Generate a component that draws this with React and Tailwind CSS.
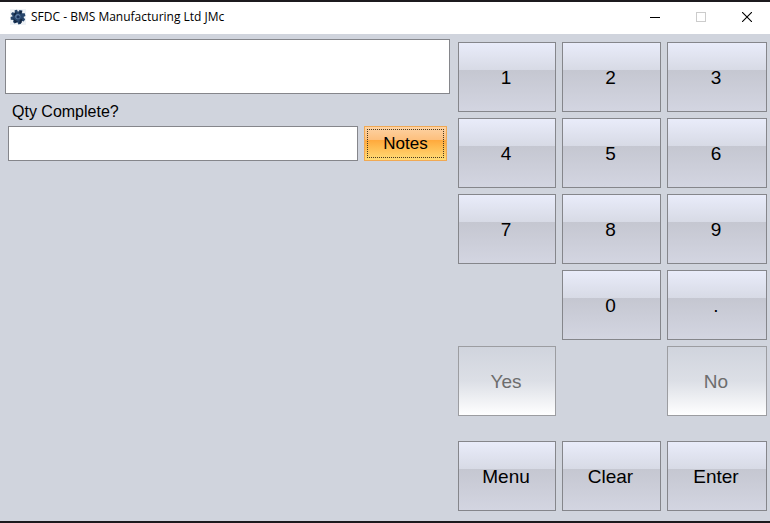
import React, { useState } from 'react';

const keys = [
    { label: '1' },
    { label: '2' },
    { label: '3' },
    { label: '4' },
    { label: '5' },
    { label: '6' },
    { label: '7' },
    { label: '8' },
    { label: '9' },
    { label: '0', className: 'col-start-2' },
    { label: '.' },
    { label: 'Yes', disabled: true },
    { label: 'No', disabled: true, className: 'col-start-3' },
    { label: 'Menu', className: 'mt-[19px]' },
    { label: 'Clear', className: 'mt-[19px]' },
    { label: 'Enter', className: 'mt-[19px]' },
];

function GearIcon() {
    return (
        <svg viewBox="0 0 16 16" className="h-4 w-4" aria-hidden="true">
            <rect width="16" height="16" fill="#eef2f6" />
            <g fill="#27456b">
                <circle cx="8" cy="8" r="5.2" />
                <path d="M4.6 1.2 L7 0.8 L8 3 L9.6 1 L12.4 1.6 L12 4.2 L14.8 4.2 L15.4 7 L13.4 8 L15.2 10.4 L13.6 12.4 L11.4 11.8 L11 14.8 L8.4 15.4 L7.4 13.2 L4.6 14.6 L3 13 L3.6 11 L0.8 10.8 L0.6 8 L2.8 7.2 L1 5 L2.2 3.2 L4.8 3.8 Z" />
            </g>
            <path d="M3.5 5.5 L6 3 L6.5 4.5 L4.5 7 Z M10 10.5 L12.5 9.5 L11.5 14 L9 14.5 Z" fill="#122641" />
            <path d="M3.4 9 L5 11 L8 12.5 L5 14 L4 12 Z M10 2 L12 2 L11 5 L9 4 Z" fill="#122641" />
            <circle cx="7.8" cy="7.6" r="2.6" fill="#5f7fa6" />
            <circle cx="8.1" cy="7.9" r="1.7" fill="#16305a" />
        </svg>
    );
}

function TitleBar() {
    return (
        <header className="flex h-8 items-center justify-between bg-white pb-[2px]">
            <div className="flex items-center gap-[5px] pl-[10px]">
                <GearIcon />
                <h1 className="font-['Open_Sans','Noto_Sans',sans-serif] text-[12px] leading-4 text-black">
                    SFDC - BMS Manufacturing Ltd JMc
                </h1>
            </div>
            <div className="flex h-full">
                <button type="button" aria-label="Minimize" className="flex w-[46px] items-center justify-center">
                    <svg viewBox="0 0 10 10" className="h-[10px] w-[10px]" shapeRendering="crispEdges">
                        <path d="M0 5.5 H10" stroke="#000" />
                    </svg>
                </button>
                <button type="button" aria-label="Maximize" disabled className="flex w-[46px] items-center justify-center">
                    <svg viewBox="0 0 10 10" className="h-[10px] w-[10px]" shapeRendering="crispEdges">
                        <rect x="0.5" y="0.5" width="9" height="9" fill="none" stroke="#ccc" />
                    </svg>
                </button>
                <button type="button" aria-label="Close" className="flex w-[46px] items-center justify-center">
                    <svg viewBox="0 0 10 10" className="h-[10px] w-[10px]">
                        <path d="M0 0 L10 10 M10 0 L0 10" stroke="#000" strokeWidth="1.1" />
                    </svg>
                </button>
            </div>
        </header>
    );
}

function Key({ label, disabled, onClick, className = '' }) {
    const look = disabled
        ? 'border-[#9c9da1] bg-linear-to-b from-[#d0d4dd] via-[#dcdfe6] to-white text-[#6d6d6d]'
        : 'border-[#85868b] bg-[linear-gradient(#e9ecfa_0%,#d7dae5_40%,#c5c7d1_40%,#d3d5e1_100%)] text-black';

    return (
        <button
            type="button"
            disabled={disabled}
            onClick={onClick}
            className={`h-[70px] border pt-[2px] pr-[2px] text-[19px] leading-6 ${look} ${className}`}
        >
            {label}
        </button>
    );
}

function App() {
    const [qty, setQty] = useState('');

    const handleKey = (label) => {
        if (label === 'Clear') {
            setQty('');
        } else if (label.length === 1) {
            setQty(qty + label);
        }
    };

    return (
        <div className="flex min-h-screen flex-col border-y-2 border-[#1c1a1e] bg-[#d0d4dd] font-['Liberation_Sans',Arial,sans-serif] text-black">
            <TitleBar />
            <main className="grid grid-cols-[445fr_309fr] gap-2 pt-[5px] pr-[3px] pl-[5px]">
                {/* Message and quantity */}
                <section>
                    <textarea
                        readOnly
                        aria-label="Message"
                        className="block h-[55px] w-full resize-none border border-[#85868b] bg-white p-1 outline-none"
                    />
                    <div className="px-[3px] pt-2">
                        <label htmlFor="qty" className="block pl-1 text-[16px] leading-5">
                            Qty Complete?
                        </label>
                        <div className="mt-1 flex gap-[6px]">
                            <input
                                id="qty"
                                type="text"
                                value={qty}
                                onChange={(e) => setQty(e.target.value)}
                                className="h-[35px] min-w-0 flex-1 border border-[#85868b] bg-white px-2 text-[16px] outline-none"
                            />
                            <button
                                type="button"
                                className="h-[35px] w-[83px] border border-[#f0a954] bg-[linear-gradient(#fdd3a4_0%,#fdbf7c_40%,#ffa93c_40%,#ffdc76_100%)] p-[2px] text-[17px] leading-5"
                            >
                                <span className="flex h-full items-center justify-center border border-dotted border-[#4a3a20]">
                                    Notes
                                </span>
                            </button>
                        </div>
                    </div>
                </section>

                {/* Keypad */}
                <section className="grid grid-cols-[98fr_99fr_100fr] content-start gap-[6px] pt-[3px] pb-[10px]">
                    {keys.map((key) => (
                        <Key key={key.label} {...key} onClick={() => handleKey(key.label)} />
                    ))}
                </section>
            </main>
        </div>
    );
}

export default App;
